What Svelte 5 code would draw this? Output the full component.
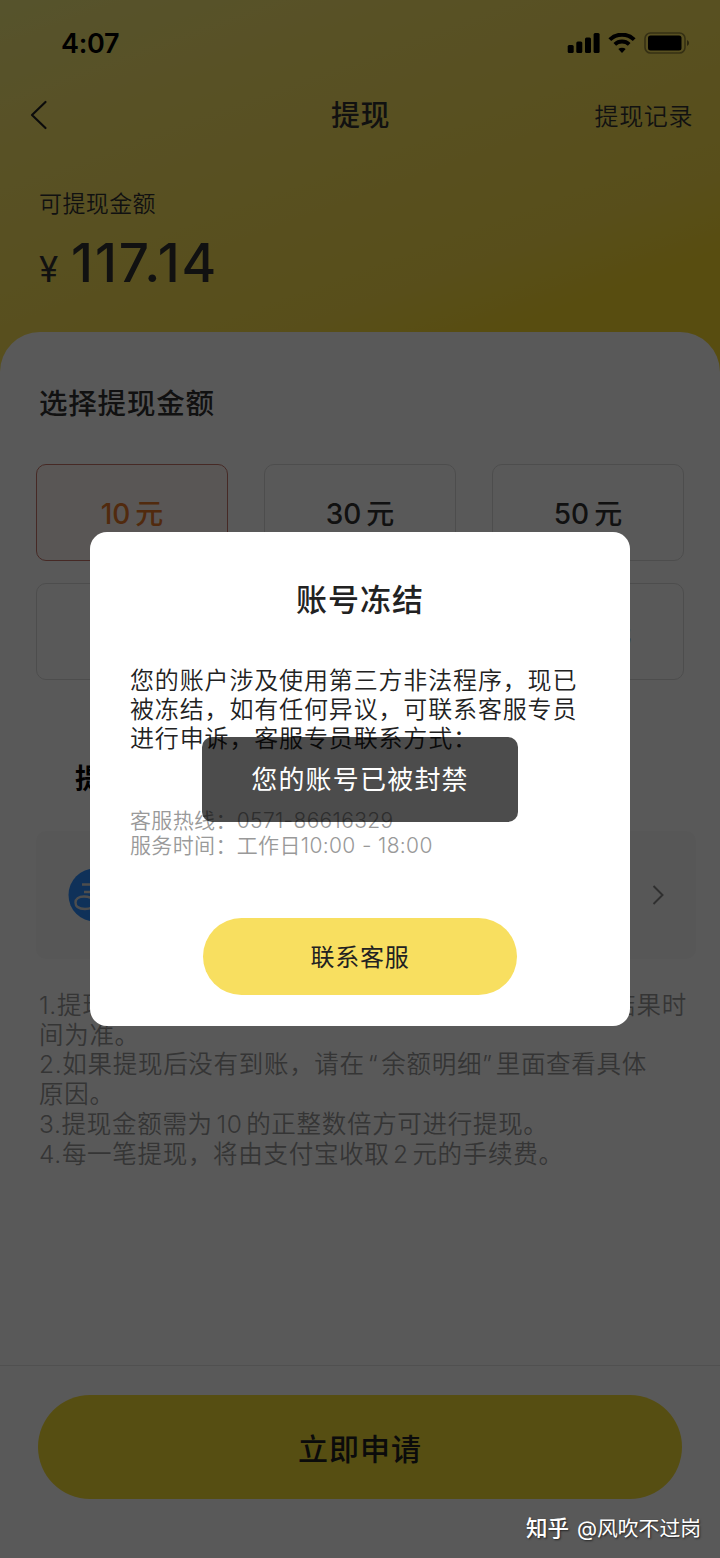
<script lang="ts">
    interface IAmount {
        value: number;
        active?: boolean;
    }

    const amounts: IAmount[] = [
        { value: 10, active: true },
        { value: 30 },
        { value: 50 },
        { value: 100 },
        { value: 150 },
        { value: 200 },
    ];

    // hair spaces keep the curly quotes off the text around them
    const notes = [
        '1.提现申请提交后预计在三个工作日内到账，以实际结果时',
        '间为准。',
        '2.如果提现后没有到账，请在\u200a“\u200a余额明细”\u200a里面查看具体',
        '原因。',
        '3.提现金额需为 10 的正整数倍方可进行提现。',
        '4.每一笔提现，将由支付宝收取 2 元的手续费。',
    ];

    const message = [
        '您的账户涉及使用第三方非法程序，现已',
        '被冻结，如有任何异议，可联系客服专员',
        '进行申诉，客服专员联系方式：',
    ];
</script>

<div class="screen" lang="zh-CN">
    <header>
        <div class="status">
            <span class="time">4:07</span>
            <div class="indicators">
                <svg width="33" height="20" viewBox="0 0 33 20">
                    <rect x="0.7" y="12" width="6" height="8" rx="1.5" />
                    <rect x="9.3" y="8.5" width="6" height="11.5" rx="1.5" />
                    <rect x="18" y="4.5" width="6" height="15.5" rx="1.5" />
                    <rect x="26.6" y="0" width="6" height="20" rx="1.5" />
                </svg>
                <svg width="28" height="20" viewBox="0 0 28 20">
                    <path d="M1.8 6.6A17.5 17.5 0 0 1 26.2 6.6" fill="none" stroke="#000" stroke-width="4" />
                    <path d="M6.8 11.4A10.4 10.4 0 0 1 21.2 11.4" fill="none" stroke="#000" stroke-width="3.8" />
                    <path d="M14 20L10.3 16.1A5.4 5.4 0 0 1 17.7 16.1Z" />
                </svg>
                <svg width="46" height="22" viewBox="0 0 46 22">
                    <rect x="1" y="1" width="40" height="20" rx="5.5" fill="none" stroke="#000" stroke-opacity=".4" stroke-width="1.6" />
                    <rect x="4" y="3.5" width="33.5" height="15" rx="2.5" />
                    <path d="M43 8a3.2 3.2 0 0 1 0 6z" fill-opacity=".5" />
                </svg>
            </div>
        </div>
        <nav>
            <svg class="back" width="18" height="30" viewBox="0 0 18 30">
                <path d="M15.5 2L2 15L15.5 28" fill="none" stroke="#222" stroke-width="2.2" stroke-linecap="round" stroke-linejoin="round" />
            </svg>
            <h1>提现</h1>
            <span class="history">提现记录</span>
        </nav>
        <div class="balance">
            <p>可提现金额</p>
            <div class="total"><span class="currency">¥</span><strong>117.14</strong></div>
        </div>
    </header>

    <main>
        <h2>选择提现金额</h2>
        <div class="amounts">
            {#each amounts as amount}
                <div class="amount" class:active={amount.active}>{amount.value}<span>元</span></div>
            {/each}
        </div>
        <h3>提现方式</h3>
        <div class="method">
            <svg width="54" height="54" viewBox="0 0 54 54">
                <circle cx="27" cy="27" r="26.5" fill="#2b8cff" />
                <path d="M14 16.5H40M27 10V24M16 24H36C34 32 28 41 17 41C10 41 7.5 38 7.5 34.5C7.5 31 10.5 28.5 16 28.5C24 28.5 34 34 48 39" fill="none" stroke="#ddd" stroke-width="2.4" />
            </svg>
            <span>支付宝</span>
            <svg class="arrow" width="12" height="20" viewBox="0 0 12 20">
                <path d="M1.5 1L10.5 10L1.5 19" fill="none" stroke="#888" stroke-width="2" />
            </svg>
        </div>
        <div class="notes">
            {#each notes as note}
                <p>{note}</p>
            {/each}
        </div>
    </main>

    <footer>
        <button>立即申请</button>
    </footer>

    <div class="mask">
        <div class="dialog">
            <h2>账号冻结</h2>
            <div class="message">
                {#each message as line}
                    <p>{line}</p>
                {/each}
            </div>
            <div class="contact">
                <p>客服热线：0571-86616329</p>
                <p>服务时间：工作日10:00 - 18:00</p>
            </div>
            <button>联系客服</button>
        </div>
    </div>

    <div class="toast">您的账号已被封禁</div>
    <div class="watermark"><b>知乎</b> @风吹不过岗</div>
</div>

<style>
    :global(body) {
        margin: 0;
    }

    .screen {
        position: relative;
        display: flex;
        flex-direction: column;
        width: 720px;
        height: 1558px;
        overflow: hidden;
        color: #333;
        background: linear-gradient(160deg, #f6ee80 0, #fde86c 140px, #fbe04c 410px, #fbdc30 480px) 0 0 / 100% 400px no-repeat;
        font-family: Inter, "Noto Sans CJK SC", sans-serif;
        white-space: nowrap;
    }

    h1,
    h2,
    h3,
    p {
        margin: 0;
        font-weight: 500;
    }

    p {
        font-weight: 350;
    }

    button {
        border: 0;
        font-family: inherit;
        color: #222;
    }

    header {
        height: 332px;
        flex: none;
    }

    .status {
        display: flex;
        align-items: center;
        justify-content: space-between;
        height: 86px;
        padding: 0 30px 0 61px;
    }

    .time {
        color: #000;
        font-size: 27px;
        font-weight: 600;
        letter-spacing: -0.3px;
    }

    .indicators {
        display: flex;
        align-items: center;
        gap: 8px;
    }

    nav {
        display: grid;
        grid-template-columns: 1fr auto 1fr;
        align-items: center;
        height: 58px;
        padding: 0 27px 0 30px;
    }

    h1 {
        padding: 2px 2px 0 0;
        font-size: 29px;
        line-height: 40px;
        letter-spacing: 0.5px;
    }

    .history {
        justify-self: end;
        padding-bottom: 2px;
        font-size: 24px;
        font-weight: 350;
        letter-spacing: 0.6px;
    }

    .balance {
        padding: 43px 39px 0;

        & p {
            font-size: 23px;
            line-height: 34px;
            letter-spacing: 0.4px;
        }
    }

    .total {
        display: flex;
        align-items: baseline;
        gap: 10px;
        margin-top: 9px;
        line-height: 66px;
    }

    .currency {
        width: 22px;
        font-size: 35px;
    }

    strong {
        font-size: 53px;
        font-weight: 500;
        letter-spacing: 1.9px;
    }

    main {
        flex: 1;
        padding: 52px 36px 0;
        border-radius: 40px 40px 0 0;
        background: #fff;

        & h2 {
            margin-left: 3px;
            font-size: 28.5px;
            line-height: 40px;
            letter-spacing: 0.8px;
        }
    }

    .amounts {
        display: grid;
        grid-template-columns: repeat(3, 192px);
        gap: 22px 36px;
        margin-top: 40px;
    }

    .amount {
        box-sizing: border-box;
        height: 97px;
        border: 1px solid #dcdcdc;
        border-radius: 10px;
        font-size: 28px;
        font-weight: 500;
        line-height: 98px;
        text-align: center;

        & span {
            margin-left: 5px;
        }

        &.active {
            border-color: #c8776a;
            color: #e8782a;
            background: #fff6f4;
        }
    }

    h3 {
        margin: 79px 0 0 39px;
        color: #000;
        font-size: 28px;
        font-weight: 700;
        line-height: 40px;
    }

    .method {
        display: flex;
        align-items: center;
        gap: 18px;
        height: 128px;
        margin: 32px -12px 0 0;
        padding: 0 32px;
        border-radius: 10px;
        background: #f9f9f9;
        font-size: 28px;
    }

    .arrow {
        margin-left: auto;
    }

    .notes {
        margin: 32px 0 0 3px;
        color: #999;
        font-size: 24.5px;
        line-height: 29.7px;
        letter-spacing: 0.7px;
        word-spacing: -4px;
    }

    footer {
        display: flex;
        justify-content: center;
        height: 163px;
        padding-top: 29px;
        border-top: 1px solid #e4e4e4;
        background: #fff;

        & button {
            width: 644px;
            height: 104px;
            border-radius: 52px;
            background: #f7de36;
            font-size: 30px;
            font-weight: 500;
            letter-spacing: 1px;
        }
    }

    .mask {
        position: absolute;
        inset: 0;
        background: rgba(0, 0, 0, 0.65);
    }

    .dialog {
        display: flex;
        flex-direction: column;
        align-items: center;
        box-sizing: border-box;
        width: 540px;
        height: 494px;
        margin: 532px auto 0;
        padding: 46px 40px 0;
        border-radius: 17px;
        color: #222;
        background: #fff;

        & h2 {
            font-size: 31px;
            line-height: 44px;
            letter-spacing: 1px;
        }

        & button {
            width: 314px;
            height: 77px;
            margin-top: 60px;
            padding-bottom: 3px;
            border-radius: 39px;
            background: #f8df60;
            font-size: 24px;
            letter-spacing: 0.8px;
        }
    }

    .message {
        align-self: stretch;
        margin: 44px 0 0;
        color: #222;
        font-size: 24px;
        line-height: 29px;
        letter-spacing: 0.85px;
    }

    .contact {
        align-self: stretch;
        margin: 55px 0 0;
        color: #999;
        font-size: 21px;
        line-height: 25px;
        letter-spacing: 0.35px;
    }

    .toast {
        position: absolute;
        top: 737px;
        left: 202px;
        width: 316px;
        height: 85px;
        border-radius: 10px;
        color: #fff;
        background: rgba(0, 0, 0, 0.7);
        font-size: 26px;
        line-height: 85px;
        letter-spacing: 1.2px;
        text-align: center;
    }

    .watermark {
        position: absolute;
        right: 19px;
        bottom: 13px;
        color: #fff;
        font-size: 20.8px;
        line-height: 32px;
        text-shadow: 1px 1px 2px rgba(0, 0, 0, 0.6);

        & b {
            margin-right: 2px;
            font-size: 21.5px;
            font-weight: 500;
        }
    }
</style>
